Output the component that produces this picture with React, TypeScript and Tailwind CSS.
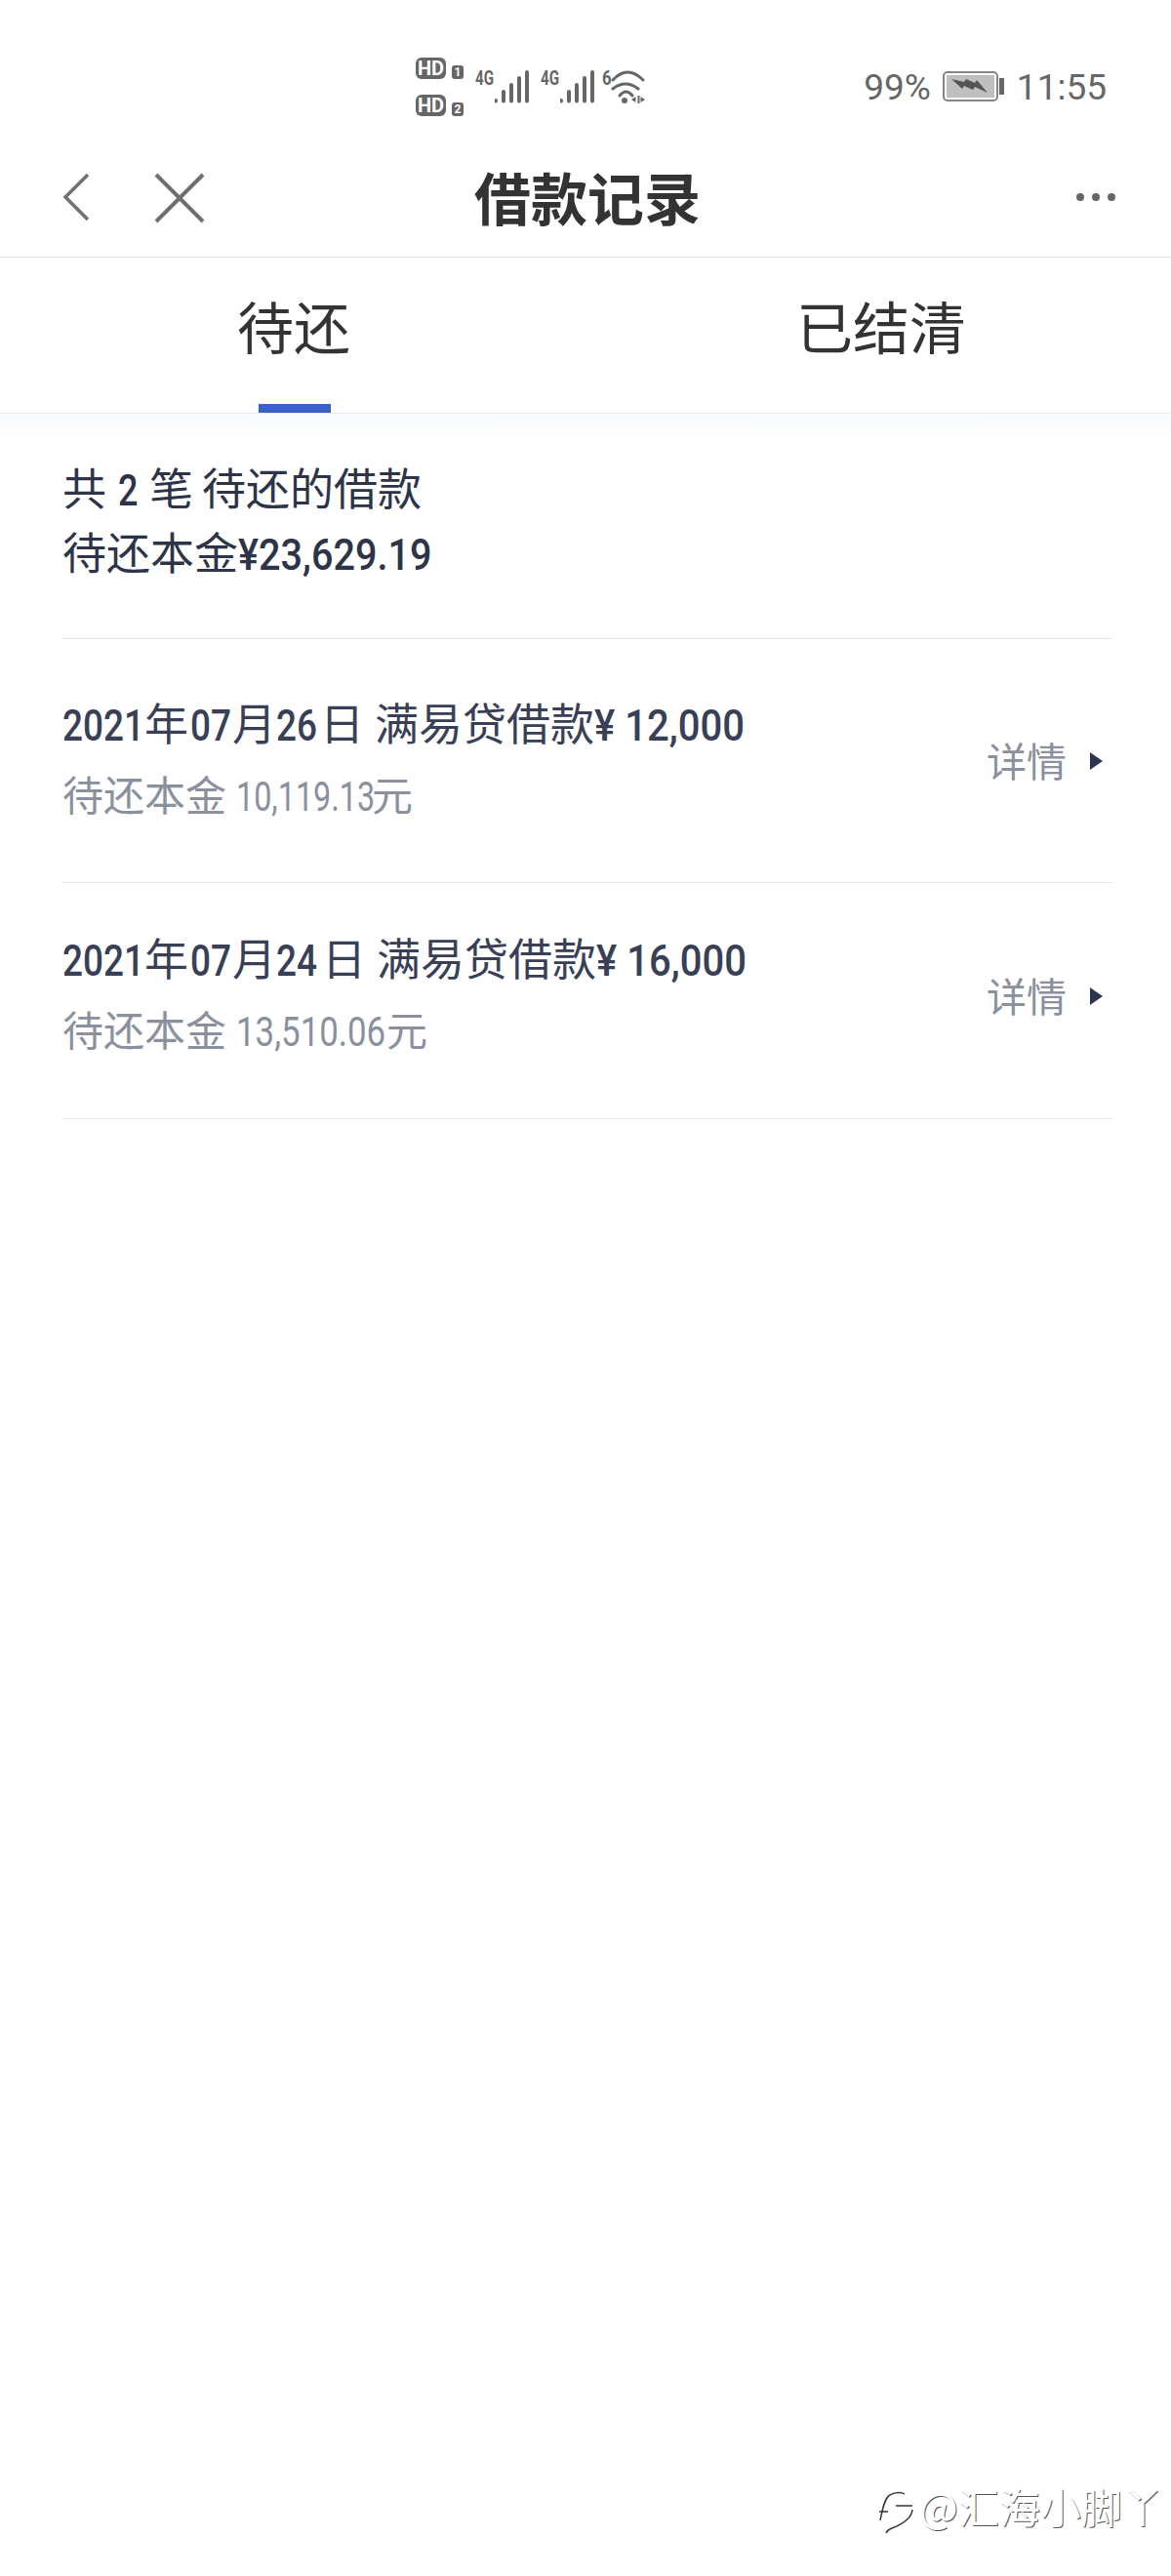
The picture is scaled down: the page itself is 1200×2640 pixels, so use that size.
import type { ReactNode } from "react";

const cjk = "font-['Noto_Sans_CJK_SC','Noto_Sans',sans-serif]";

// digits in the shot are a narrow DIN-like face, so squeeze Roboto into a fixed box
const Num = ({ className, children }: { className: string; children: ReactNode }) => (
  <span className={`inline-block origin-left whitespace-nowrap font-['Roboto',sans-serif] ${className}`}>{children}</span>
);

const Signal = () => (
  <div className="flex items-start w-[67px] h-[36px]">
    <span className="inline-block w-[20px] origin-left scale-x-[0.72] whitespace-nowrap font-['Roboto',sans-serif] font-bold text-[21px] leading-[17px] text-[#666]">4G</span>
    <svg width="36" height="36" viewBox="0 0 36 36" fill="none" stroke="#666" strokeWidth="4" strokeLinecap="round">
      <path d="M1 31V31.5M9 22V31.5M17 15V31.5M25 8V31.5M33 2V31.5" />
    </svg>
  </div>
);

const Wifi = () => (
  <div className="flex items-start -ml-[4px] h-[36px]">
    <span className="inline-block w-[9px] origin-left scale-x-[0.8] font-['Roboto',sans-serif] font-bold text-[21px] leading-[17px] text-[#666]">6</span>
    <svg width="36" height="36" viewBox="0 0 36 36" fill="none" stroke="#666" strokeWidth="3" strokeLinecap="round">
      <path d="M2 10Q17 -6 33 10" />
      <path d="M2 19Q15 9 28 19" />
      <path d="M9 26Q15.5 18 22 26" />
      <circle cx="14" cy="31" r="3" fill="#666" stroke="none" />
      <path d="M21 30L25.5 27V33ZM27.5 26H29.5V34H27.5ZM30.5 27L35 30L30.5 33Z" fill="#666" stroke="none" />
    </svg>
  </div>
);

const HdBadge = ({ n }: { n: string }) => (
  <div className="flex items-end gap-[6px]">
    <span className="w-[31px] h-[22px] rounded-[6px] bg-[#666] text-white font-['Roboto',sans-serif] font-bold text-[20px] leading-[22px] text-center">HD</span>
    <span className="w-[12px] h-[14px] rounded-[3px] bg-[#666] text-white font-['Roboto',sans-serif] font-bold text-[12px] leading-[14px] text-center">{n}</span>
  </div>
);

const StatusBar = () => (
  <div className="h-[150px] flex items-start pl-[426px] pr-[66px] pt-[59px]">
    <div className="flex flex-col gap-[16px] w-[61px]">
      <HdBadge n="1" />
      <HdBadge n="2" />
    </div>
    <div className="flex mt-[13px]">
      <Signal />
      <Signal />
      <Wifi />
    </div>
    <div className="ml-auto flex items-center gap-[12px] mt-[9px] text-[#666] font-['Roboto',sans-serif] text-[37px] leading-[44px]">
      <span>99%</span>
      <svg className="-mt-[2px]" width="64" height="32" viewBox="0 0 64 32" fill="none">
        <rect x="1" y="1" width="55" height="29" rx="4" stroke="#858585" strokeWidth="2" />
        <rect x="4" y="4" width="49" height="23" fill="#bfbfbf" />
        <path d="M58 7h5v17h-5z" fill="#666" />
        <path d="M9 8L22 11L24 8L33 12L35 9L46 22L33 16L31 19L22 15L20 18Z" fill="#555" />
      </svg>
      <span>11:55</span>
    </div>
  </div>
);

const Header = () => (
  <div className="relative h-[114px] flex items-center justify-center border-b border-[#e2e2e2]">
    <div className="absolute left-[64px] top-[27px] flex gap-[66px]">
      <svg width="28" height="50" viewBox="0 0 28 50" fill="none" stroke="#707070" strokeWidth="3.5">
        <path d="M26 2L3 25L26 48" />
      </svg>
      <svg width="52" height="52" viewBox="0 0 52 52" fill="none" stroke="#707070" strokeWidth="4">
        <path d="M2 2L50 50M50 2L2 50" />
      </svg>
    </div>
    <h1 className={`${cjk} font-bold text-[58px] leading-[70px] text-[#333] mb-[12px] ml-[4px]`}>借款记录</h1>
    <div className="absolute right-[57px] top-[48px] flex gap-[8px]">
      <span className="w-[8px] h-[8px] rounded-full bg-[#666]" />
      <span className="w-[8px] h-[8px] rounded-full bg-[#666]" />
      <span className="w-[8px] h-[8px] rounded-full bg-[#666]" />
    </div>
  </div>
);

const Tabs = () => (
  <div>
    <div className="flex h-[160px] border-b border-[#e8eaee]">
      <div className="relative w-[600px] flex justify-center pt-[31px] pl-[2px]">
        <span className={`${cjk} text-[58px] leading-[76px] text-[#333]`}>待还</span>
        <span className="absolute left-[265px] bottom-0 w-[74px] h-[9px] bg-[#3a5fc8]" />
      </div>
      <div className="w-[600px] flex justify-center pt-[31px] pl-[6px]">
        <span className={`${cjk} text-[58px] leading-[76px] text-[#333]`}>已结清</span>
      </div>
    </div>
    <div className="h-[24px] bg-gradient-to-b from-[#f7f9fb] to-white" />
  </div>
);

const Summary = () => (
  <div className={`ml-[64px] mr-[60px] h-[207px] border-b border-[#e2e8ee] pt-[20px] text-[45px] leading-[62px] text-[#2e3447] ${cjk}`}>
    <div>
      共<Num className="ml-[12px] mr-[12px] w-[20px] scale-x-[0.8] font-medium">2</Num>笔<span className="ml-[9px]">待还的借款</span>
    </div>
    <div>
      待还本金<Num className="w-[200px] scale-x-[0.88] font-medium">¥23,629.19</Num>
    </div>
  </div>
);

const TitleLine = ({ day, amount }: { day: ReactNode; amount: ReactNode }) => (
  <div className={`${cjk} text-[45px] leading-[64px] text-[#394056]`}>
    <Num className="w-[84px] scale-x-[0.82] font-medium">2021</Num>年
    <Num className="w-[43px] scale-x-[0.82] font-medium ml-[2px]">07</Num>月
    {day}日
    <span className="ml-[11px]">满易贷借款</span>
    {amount}
  </div>
);

const DetailLink = () => (
  <div className="flex items-center gap-[24px] pr-[10px]">
    <span className={`${cjk} text-[41px] leading-[56px] text-[#8a909e]`}>详情</span>
    <span className="mt-[4px] w-0 h-0 border-y-[9px] border-y-transparent border-l-[13px] border-l-[#2b3450]" />
  </div>
);

const Rows = () => (
  <div>
    <div className="ml-[64px] mr-[60px] h-[250px] pt-[53px] border-b border-[#e2e8ee]">
      <div className="flex items-center justify-between">
        <div>
          <TitleLine
            day={<Num className="w-[45px] scale-x-[0.82] font-medium">26</Num>}
            amount={<Num className="w-[154px] scale-x-[0.89] font-medium">¥ 12,000</Num>}
          />
          <div className={`${cjk} text-[42px] leading-[60px] text-[#8a909e] mt-[7px]`}>
            待还本金<Num className="ml-[10px] w-[139px] scale-x-[0.77]">10,119.13</Num>元
          </div>
        </div>
        <DetailLink />
      </div>
    </div>
    <div className="ml-[64px] mr-[60px] h-[242px] pt-[44px] border-b border-[#e2e8ee]">
      <div className="flex items-center justify-between">
        <div>
          <TitleLine
            day={<Num className="w-[47px] scale-x-[0.82] font-medium">24</Num>}
            amount={<Num className="w-[154px] scale-x-[0.89] font-medium">¥ 16,000</Num>}
          />
          <div className={`${cjk} text-[42px] leading-[60px] text-[#8a909e] mt-[7px]`}>
            待还本金<Num className="ml-[10px] w-[154px] scale-x-[0.83]">13,510.06</Num>元
          </div>
        </div>
        <DetailLink />
      </div>
    </div>
  </div>
);

export default function App() {
  return (
    <div className="relative w-[1200px] h-[2640px] bg-white overflow-hidden">
      <StatusBar />
      <Header />
      <Tabs />
      <Summary />
      <Rows />
      <div className="absolute left-[900px] top-[2546px] flex items-start gap-[6px] text-white [text-shadow:1px_1px_0_#555]">
        <svg width="36" height="52" viewBox="0 0 36 52" fill="none" stroke="#333" strokeWidth="1.5">
          <path d="M2 37C4 28 6 14 12 11C16 8 24 8 27 10" />
          <path d="M18 22H35" />
          <path d="M35 26C34 36 22 42 14 45C11 46 9 48 8 50" />
          <path d="M1 28H10" />
        </svg>
        <span className={`${cjk} text-[42px] leading-[44px]`}>@汇海小脚丫</span>
      </div>
    </div>
  );
}
